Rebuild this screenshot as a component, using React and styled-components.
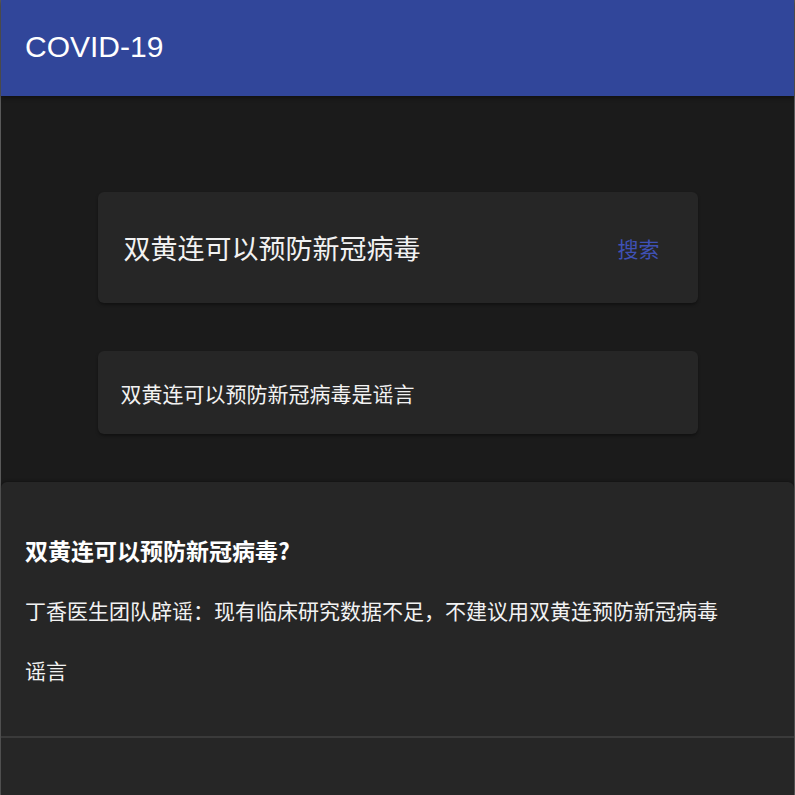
import React from "react";
import styled, { createGlobalStyle } from "styled-components";

const Global = createGlobalStyle`
  html, body { margin: 0; padding: 0; background: #1b1b1b; }
  body { font-family: "Liberation Sans", Arial, "Noto Sans CJK SC", sans-serif; }
`;

const Page = styled.div`
  min-height: 795px;
  box-sizing: border-box;
  border-left: 1px solid #595959;
  border-right: 1px solid #595959;
  background: #1b1b1b;
  display: flex;
  flex-direction: column;
`;

const Header = styled.header`
  height: 96px;
  background: #31469a;
  display: flex;
  align-items: center;
  padding: 0 24px;
  box-shadow: 0 2px 4px rgba(0,0,0,0.4);
`;

const Title = styled.h1`
  margin: 0;
  font-family: "Liberation Sans", Arial, sans-serif;
  font-weight: 400;
  font-size: 30px;
  color: #ffffff;
  margin-top: -2px;
`;

const Main = styled.main`
  display: flex;
  flex-direction: column;
  align-items: center;
  padding-top: 96px;
  gap: 48px;
`;

const Card = styled.div`
  width: 600px;
  box-sizing: border-box;
  background: #262626;
  border-radius: 6px;
  box-shadow: 0 2px 3px rgba(0,0,0,0.35);
  display: flex;
  align-items: center;
  justify-content: space-between;
  height: ${p => p.$h}px;
  padding: ${p => p.$pad};
`;

const Query = styled.span`
  font-family: "Noto Sans CJK SC", sans-serif;
  font-size: 27px;
  color: #f2f2f2;
`;

const SearchBtn = styled.button`
  background: none;
  border: none;
  padding: 0;
  font-family: "Noto Sans CJK SC", sans-serif;
  font-size: 21px;
  color: #3f51b5;
  cursor: pointer;
`;

const Answer = styled.span`
  font-family: "Noto Sans CJK SC", sans-serif;
  font-size: 21px;
  color: #f2f2f2;
`;

const Panel = styled.section`
  margin-top: 48px;
  flex: 1;
  background: #262626;
  border-radius: 6px 6px 0 0;
  box-shadow: 0 -1px 3px rgba(0,0,0,0.3);
  display: flex;
  flex-direction: column;
`;

const PanelBody = styled.div`
  padding: 38px 24px 36px;
  display: flex;
  flex-direction: column;
`;

const PanelTitle = styled.h2`
  margin: 0;
  font-family: "Noto Sans CJK SC", sans-serif;
  font-size: 23px;
  font-weight: 700;
  color: #ffffff;
  line-height: 60px;
`;

const Para = styled.p`
  margin: 0;
  font-family: "Noto Sans CJK SC", sans-serif;
  font-size: 21px;
  color: #f2f2f2;
  line-height: 60px;
`;

const Divider = styled.hr`
  margin: 0;
  border: none;
  height: 2px;
  background: #3a3a3a;
`;

export default function App() {
  return (
    <>
      <Global />
      <Page>
        <Header>
          <Title>COVID-19</Title>
        </Header>
        <Main>
          <Card $h={111} $pad="0 38px 0 26px">
            <Query>双黄连可以预防新冠病毒</Query>
            <SearchBtn>搜索</SearchBtn>
          </Card>
          <Card $h={83} $pad="0 23px">
            <Answer>双黄连可以预防新冠病毒是谣言</Answer>
          </Card>
        </Main>
        <Panel>
          <PanelBody>
            <PanelTitle>双黄连可以预防新冠病毒?</PanelTitle>
            <Para>丁香医生团队辟谣：现有临床研究数据不足，不建议用双黄连预防新冠病毒</Para>
            <Para>谣言</Para>
          </PanelBody>
          <Divider />
        </Panel>
      </Page>
    </>
  );
}
